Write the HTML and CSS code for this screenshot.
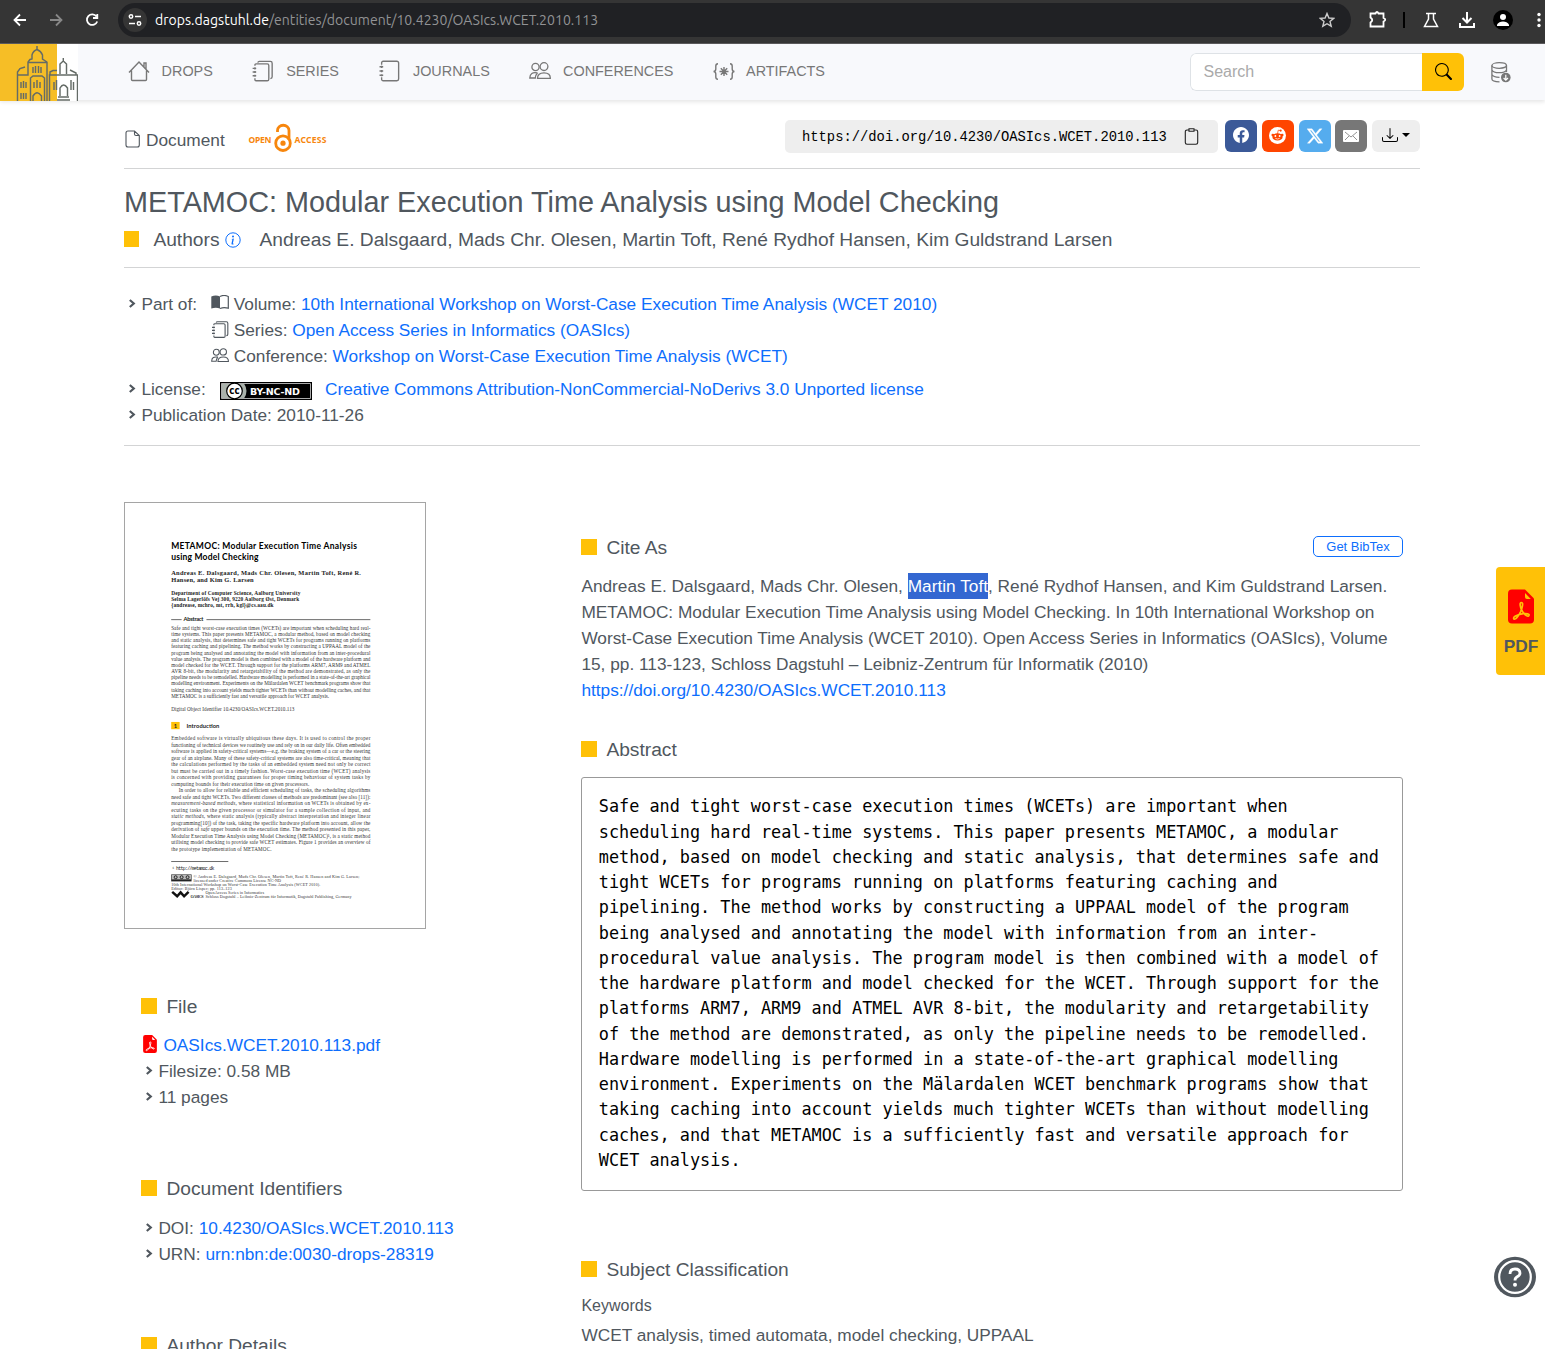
FILE: index.html
```html
<!DOCTYPE html>
<html lang="en">
<head>
<meta charset="utf-8">
<title>METAMOC: Modular Execution Time Analysis using Model Checking</title>
<link rel="stylesheet" href="styles.css">
</head>
<body>
<svg class="defs" width="0" height="0">
  <symbol id="series" viewBox="0 0 20 20"><g fill="none" stroke="currentColor" stroke-width="1.300"><path d="M2.800 5V4.200a1 1 0 0 1 1-1H14.500a1.500 1.500 0 0 1 1.500 1.500V17.800a1.500 1.500 0 0 1-1.500 1.500H3.800a1 1 0 0 1-1-1V17"/><path d="M5.500 2Q5.800 .8 7 .8H17.500A1.700 1.700 0 0 1 19.200 2.500V15.500Q19.200 17 17.500 17.200"/><path d="M.6 7.500H4M.6 11H4M.6 14.500H4M2.800 6.500V8.500M2.800 10V12M2.800 13.500V15.500"/></g></symbol>
  <symbol id="journal" viewBox="0 0 20 20"><g fill="none" stroke="currentColor" stroke-width="1.300"><path d="M2.500 4V2.200A1.500 1.500 0 0 1 4 .7H17A1.700 1.700 0 0 1 18.700 2.400V17.600A1.700 1.700 0 0 1 17 19.300H4A1.500 1.500 0 0 1 2.500 17.800V16"/><path d="M.5 6H4M.5 10H4M.5 14H4M2.500 5V7.200M2.500 9V11.200M2.500 13V15"/></g></symbol>
  <symbol id="people" viewBox="0 0 22 18"><g fill="none" stroke="currentColor" stroke-width="1.300"><circle cx="6.500" cy="5" r="3.600"/><circle cx="15" cy="4.600" r="3.900"/><path d="M8.500 16.300Q8.500 10.800 15 10.800T21.300 16.300ZM8.500 11Q1 9.500.8 16H6.300Q6.500 13 8.500 11"/></g></symbol>
  <symbol id="chev" viewBox="0 0 8 9"><path d="M1.800 1 5.800 4.500 1.800 8" fill="none" stroke="currentColor" stroke-width="2.200"/></symbol>
  <symbol id="pdf" viewBox="0 0 26 34"><path d="M4 0H17L26 9V30a4 4 0 0 1-4 4H4a4 4 0 0 1-4-4V4A4 4 0 0 1 4 0Z" fill="red"/><path d="M17 3.500V7.500a2 2 0 0 0 2 2h3.800Z" fill="var(--mark)"/><path d="M13.500 13C11 13 12.500 18 13.500 20C15.500 24.500 19 27.500 20.800 26.200C22.500 24.500 18 23.500 14 24.300C9 25.200 4.500 27.500 5.800 29.300C7.500 31 11 25.500 12.600 22.300C14 19 15.800 13 13.500 13Z" fill="none" stroke="var(--mark)" stroke-width="1.700"/></symbol>
</svg>

<header class="browser">
  <svg class="b-nav" width="104" height="24" viewBox="0 0 104 24" fill="none" stroke="#fff" stroke-width="1.800"><path d="M18 12H7M12 6.500 6.500 12 12 17.500"/><path stroke="#888" d="M42 12H53M48 6.500 53.500 12 48 17.500"/><path d="M88.500 8.500A5.300 5.300 0 1 0 89.200 13.500M89.300 6V10H85"/></svg>
  <div class="omni">
    <span class="tune"><svg width="14" height="14" viewBox="0 0 14 14" fill="none" stroke="#fff" stroke-width="1.500"><circle cx="3" cy="3.500" r="1.700"/><path d="M7 3.500H13M1 10.500H7"/><circle cx="11" cy="10.500" r="1.700"/></svg></span>
    <span class="url"><b>drops.dagstuhl.de</b>/entities/document/10.4230/OASIcs.WCET.2010.113</span>
    <svg class="star" width="16" height="16" viewBox="0 0 16 16" fill="none" stroke="#ccc" stroke-width="1.400"><path d="M8 1.500 9.900 6 14.700 6.400 11 9.500 12.200 14.200 8 11.700 3.800 14.200 5 9.500 1.300 6.400 6.100 6Z"/></svg>
  </div>
  <svg class="b-tools" width="194" height="24" viewBox="1351 8 194 24" fill="none" stroke="#fff" stroke-width="1.800"><path d="M1370.500 13.500H1375.500Q1377 10.500 1378.500 13.500H1383.500V18Q1387 19.500 1383.500 21.500V26.500H1370.500V22.500Q1374 20 1370.500 17.500Z"/><path stroke="#000" stroke-width="2" d="M1404 12V28"/><path stroke-width="1.500" d="M1426 13.500H1436M1428.500 13.500V19L1424.500 26.500H1437.500L1433.500 19V13.500"/><path stroke-width="2" d="M1467 12V22M1462.500 18 1467 22.500 1471.500 18M1460 23V27H1474V23"/><circle cx="1503" cy="20" r="10" fill="#000" stroke="none"/><circle cx="1503" cy="17" r="3" fill="#fff" stroke="none"/><path d="M1497 26V24.500Q1499 21.500 1503 21.500T1509 24.500V26Z" fill="#fff" stroke="none"/><g fill="#fff" stroke="none"><circle cx="1539" cy="14.500" r="1.700"/><circle cx="1539" cy="20" r="1.700"/><circle cx="1539" cy="25.500" r="1.700"/></g></svg>
</header>

<nav class="nav">
  <svg class="logo" width="78" height="57" viewBox="0 44 78 57"><path fill="#f6be26" d="M0 44H57V101H0Z"/><path fill="#fff" d="M57 44H78V101H57Z"/>
    <g fill="none" stroke="#646b66" stroke-width="1.450"><path d="M17.500 101V75H28V62.500H47V101M17.500 75V72L20 68.500 25 67M28 62 30 59.500 32 59V55Q33 51 37 49.500Q41 51 42.500 55V59L47 62M37 46V50M30.500 101V78L33 76H42L44.500 78V101M33 101V96Q37 89.500 41.500 96V101M49.500 101V75H77.500V101M50 75V72L53 70.500H57M60 74V64L63.300 61 66.500 64V74M63.300 58V61M70 70 76 73V75M60 96V88Q63.500 82 67.500 88V96M58 97H69M57 100H70"/><path d="M33 73V67M35.500 73V66M38.500 73V66M41 73V67M21 88V82M23.500 88V81M26 88V82M34 88V82M37 88V80M40 88V82M21 99V93M23.500 99V93M26 99V93M54 90V82M56.500 90V80M71 90V80M73.500 90V82"/></g></svg>
  <a class="n1"><svg width="22" height="22" viewBox="0 0 22 22" fill="none" stroke="currentColor" stroke-width="1.400"><path d="M1 12.500 11 2 21 12.500M3.500 10.500V19.500Q3.500 20.500 4.500 20.500H17.500Q18.500 20.500 18.500 19.500V10.500M16 7V3H18V9"/></svg>DROPS</a>
  <a class="n2"><svg width="21" height="22"><use href="#series"/></svg>SERIES</a>
  <a class="n3"><svg width="21" height="22"><use href="#journal"/></svg>JOURNALS</a>
  <a class="n4"><svg width="22" height="18"><use href="#people"/></svg>CONFERENCES</a>
  <a class="n5"><svg width="22" height="17" viewBox="0 0 22 17" fill="none" stroke="currentColor" stroke-width="1.400"><path d="M5 .8Q2.800 .8 2.800 3V6Q2.800 8.200.6 8.500Q2.800 8.800 2.800 11V14Q2.800 16.200 5 16.200M17 .8Q19.200 .8 19.200 3V6Q19.200 8.200 21.400 8.500Q19.200 8.800 19.200 11V14Q19.200 16.200 17 16.200M11 4V13M6.500 8.500H15.500M7.800 5.300 14.200 11.700M14.200 5.300 7.800 11.700"/></svg>ARTIFACTS</a>
  <div class="search"><span>Search</span><button><svg width="17" height="17" viewBox="0 0 16 16"><path d="M11.742 10.344a6.500 6.500 0 1 0-1.397 1.398q.044.060.098.115l3.850 3.850a1 1 0 0 0 1.415-1.414l-3.850-3.850a1 1 0 0 0-.115-.1zM12 6.500a5.500 5.500 0 1 1-11 0 5.500 5.500 0 0 1 11 0"/></svg></button></div>
  <svg class="db" width="20" height="21" viewBox="0 0 20 21" fill="none" stroke="#777" stroke-width="1.300"><ellipse cx="8.200" cy="3.500" rx="7.300" ry="2.800"/><path d="M.9 3.500V17Q1 19.700 8.500 19.900M.9 8Q2 10.700 8.200 10.700T15.500 8M.9 12.500Q2 15.200 8.500 15.300M15.500 3.500V10"/><circle cx="14.800" cy="15.500" r="4.800" fill="#777" stroke="none"/><path stroke="#fff" stroke-width="1.200" d="M14.800 12.800V18M12.600 16 14.800 18.200 17 16"/></svg>
</nav>

<main class="page">
  <section class="top">
    <div class="kind"><svg width="17" height="18" viewBox="0 0 17 18" fill="none" stroke="currentColor" stroke-width="1.100"><path d="M10.500 1H4A2 2 0 0 0 2 3V15A2 2 0 0 0 4 17H13.300A2 2 0 0 0 15.300 15V5.500ZM10.500 1V4A1.500 1.500 0 0 0 12 5.500H15.300"/></svg>Document</div>
    <svg class="oa" width="80" height="30" viewBox="248 123 80 30"><g fill="none" stroke="#f7860d" stroke-width="2.800"><circle cx="283" cy="143.200" r="7.300"/><path d="M277.500 132V130.500A5.700 5.200 0 0 1 289 130.500V140"/></g><circle cx="283" cy="143.200" r="2.600" fill="#f7860d"/><g class="oa-t"><text x="248.500" y="143" textLength="23">OPEN</text><text x="294.500" y="143" textLength="32">ACCESS</text></g></svg>
    <div class="doi">https://doi.org/10.4230/OASIcs.WCET.2010.113<svg width="15" height="17" viewBox="0 0 15 17" fill="none" stroke="#222" stroke-width="1.100"><path d="M4.500 2H3A1.700 1.700 0 0 0 1.300 3.700V14.500A1.700 1.700 0 0 0 3 16.200H12A1.700 1.700 0 0 0 13.700 14.500V3.700A1.700 1.700 0 0 0 12 2H10.500M5 .7H10V3.200H5Z"/></svg></div>
    <div class="share">
      <a class="fb"><svg width="16" height="16" viewBox="0 0 16 16" fill="#fff"><path d="M16 8.049c0-4.446-3.582-8.050-8-8.050C3.580 0 0 3.603 0 8.050c0 4.017 2.926 7.347 6.750 7.951v-5.625H4.720V8.050h2.030V6.275c0-2.017 1.195-3.131 3.022-3.131.876 0 1.791.157 1.791.157v1.980h-1.009c-.993 0-1.303.621-1.303 1.258v1.510h2.218l-.354 2.326H9.250V16c3.824-.604 6.750-3.934 6.750-7.951"/></svg></a>
      <a class="rd"><svg width="17" height="17" viewBox="0 0 16 16"><circle cx="8" cy="8" r="8" fill="#fff"/><g fill="#ff4500"><ellipse cx="8" cy="9.300" rx="4.800" ry="3.500"/><circle cx="3.600" cy="7.600" r="1.300"/><circle cx="12.400" cy="7.600" r="1.300"/><circle cx="11" cy="3.400" r="1"/></g><path d="M8 6.500 8.700 3 11 3.400" fill="none" stroke="#ff4500" stroke-width=".7"/><g fill="#fff"><circle cx="6" cy="8.500" r=".9"/><circle cx="10" cy="8.500" r=".9"/></g><path d="M6 10.700Q8 12 10 10.700" stroke="#fff" stroke-width=".7" fill="none"/></svg></a>
      <a class="tw"><svg width="16" height="16" viewBox="0 0 16 16" fill="#fff" stroke="#fff" stroke-width=".3"><path d="M12.600.75h2.454l-5.360 6.142L16 15.250h-4.937l-3.867-5.070-4.425 5.070H.316l5.733-6.570L0 .75h5.063l3.495 4.633L12.601.75Zm-.86 13.028h1.360L4.323 2.145H2.865z"/></svg></a>
      <a class="ml"><svg width="16" height="12" viewBox="0 0 16 12"><rect width="16" height="12" rx="1" fill="#fff"/><path d="M2 2 8 7 14 2M2 10 6 6M14 10 10 6" fill="none" stroke="#777" stroke-width=".8"/></svg></a>
      <a class="dl"><svg width="16" height="16" viewBox="0 0 16 16"><path d="M.5 9.900a.5.500 0 0 1 .5.500v2.500a1 1 0 0 0 1 1h12a1 1 0 0 0 1-1v-2.500a.5.500 0 0 1 1 0v2.500a2 2 0 0 1-2 2H2a2 2 0 0 1-2-2v-2.500a.5.500 0 0 1 .5-.5M7.646 11.854a.5.500 0 0 0 .708 0l3-3a.5.500 0 0 0-.708-.708L8.500 10.293V1.500a.5.500 0 0 0-1 0v8.793L5.354 8.146a.5.500 0 1 0-.708.708z"/></svg><i class="caret"></i></a>
    </div>
  </section>

  <section class="titles">
    <h1>METAMOC: Modular Execution Time Analysis using Model Checking</h1>
    <div class="authors"><i class="sq"></i><span class="lab">Authors</span><svg width="16" height="16" viewBox="0 0 16 16"><circle cx="8" cy="8" r="7.200" fill="none" stroke="#0d6efd" stroke-width="1"/><path fill="#0d6efd" d="m8.930 6.588-2.290.287-.082.380.450.083c.294.070.352.176.288.469l-.738 3.468c-.194.897.105 1.319.808 1.319.545 0 1.178-.252 1.465-.598l.088-.416c-.2.176-.492.246-.686.246-.275 0-.375-.193-.304-.533zM9 4.500a1 1 0 1 1-2 0 1 1 0 0 1 2 0"/></svg><span class="names">Andreas E. Dalsgaard, Mads Chr. Olesen, Martin Toft, René Rydhof Hansen, Kim Guldstrand Larsen</span></div>
  </section>

  <section class="meta">
    <div class="part">
      <div class="row"><svg class="chev"><use href="#chev"/></svg>Part of:</div>
      <div>
        <div class="row"><svg class="ic up" width="18" height="15" viewBox="0 0 18 15"><path d="M.3 1.500Q5-.7 9 1.500V13.500Q5 12 .3 13.500Z" fill="currentColor"/><path d="M9 1.500Q13-.7 17.300 1.500V13.300Q13 12 9 13.500" fill="none" stroke="currentColor" stroke-width="1.200"/></svg>Volume:&nbsp;<a>10th International Workshop on Worst-Case Execution Time Analysis (WCET 2010)</a></div>
        <div class="row"><svg class="ic" width="18" height="17"><use href="#series"/></svg>Series:&nbsp;<a>Open Access Series in Informatics (OASIcs)</a></div>
        <div class="row"><svg class="ic" width="18" height="15"><use href="#people"/></svg>Conference:&nbsp;<a>Workshop on Worst-Case Execution Time Analysis (WCET)</a></div>
      </div>
    </div>
    <div class="row lic"><svg class="chev"><use href="#chev"/></svg>License:<svg class="cc" width="92" height="18" viewBox="0 0 92 18"><path d="M0 0H92V18H0Z"/><path fill="#aab2ab" d="M1.500 1.500H24Q29 9 24 16.500H1.500Z"/><path fill="none" stroke="#aaa" d="M1.500 1.500H90.500V16.500H1.500Z"/><circle cx="14.500" cy="9" r="7.800" fill="#fff" stroke="#000" stroke-width="1.200"/><text x="9.200" y="12" textLength="10.500" class="cct">cc</text><text x="30" y="12.500" textLength="50" class="ccb">BY-NC-ND</text></svg><a>Creative Commons Attribution-NonCommercial-NoDerivs 3.0 Unported license</a></div>
    <div class="row"><svg class="chev"><use href="#chev"/></svg>Publication Date: 2010-11-26</div>
  </section>

  <div class="cols">
    <aside>
      <svg class="thumb" width="302" height="427" viewBox="124 502 302 427">
        <g class="tt"><text x="170.500" y="548" textLength="187">METAMOC: Modular Execution Time Analysis</text><text x="170.500" y="559.200" textLength="88">using Model Checking</text></g>
        <g class="ta"><text x="170.500" y="573.800" textLength="191">Andreas E. Dalsgaard, Mads Chr. Olesen, Martin Toft, René R.</text><text x="170.500" y="581" textLength="83">Hansen, and Kim G. Larsen</text></g>
        <g class="td"><text x="170.500" y="594.300" textLength="130">Department of Computer Science, Aalborg University</text><text x="170.500" y="600.200" textLength="129">Selma Lagerlöfs Vej 300, 9220 Aalborg Øst, Denmark</text><text x="170.500" y="606.200" textLength="103">{andrease, mchro, mt, rrh, kgl}@cs.aau.dk</text></g>
        <path d="M170.500 619H181M206 619H371M170.500 862.500H228" stroke="#444" stroke-width=".8"/>
        <text class="th" x="183" y="620.800" textLength="20">Abstract</text>
        <g class="tb">
          <text x="170.500" y="629" textLength="200.500">Safe and tight worst-case execution times (WCETs) are important when scheduling hard real-</text>
          <text x="170.500" y="635.300" textLength="200.500">time systems. This paper presents METAMOC, a modular method, based on model checking</text>
          <text x="170.500" y="641.600" textLength="200.500">and static analysis, that determines safe and tight WCETs for programs running on platforms</text>
          <text x="170.500" y="647.800" textLength="200.500">featuring caching and pipelining. The method works by constructing a UPPAAL model of the</text>
          <text x="170.500" y="654.100" textLength="200.500">program being analysed and annotating the model with information from an inter-procedural</text>
          <text x="170.500" y="660.300" textLength="200.500">value analysis. The program model is then combined with a model of the hardware platform and</text>
          <text x="170.500" y="666.600" textLength="200.500">model checked for the WCET. Through support for the platforms ARM7, ARM9 and ATMEL</text>
          <text x="170.500" y="672.800" textLength="200.500">AVR 8-bit, the modularity and retargetability of the method are demonstrated, as only the</text>
          <text x="170.500" y="679.100" textLength="200.500">pipeline needs to be remodelled. Hardware modelling is performed in a state-of-the-art graphical</text>
          <text x="170.500" y="685.300" textLength="200.500">modelling environment. Experiments on the Mälardalen WCET benchmark programs show that</text>
          <text x="170.500" y="691.600" textLength="200.500">taking caching into account yields much tighter WCETs than without modelling caches, and that</text>
          <text x="170.500" y="697.800" textLength="159">METAMOC is a sufficiently fast and versatile approach for WCET analysis.</text>
          <text x="170.500" y="711" textLength="124">Digital Object Identifier 10.4230/OASIcs.WCET.2010.113</text>
          <text x="170.500" y="740.500" textLength="200.500">Embedded software is virtually ubiquitous these days. It is used to control the proper</text>
          <text x="170.500" y="747" textLength="200.500">functioning of technical devices we routinely use and rely on in our daily life. Often embedded</text>
          <text x="170.500" y="753.500" textLength="200.500">software is applied in safety-critical systems—e.g. the braking system of a car or the steering</text>
          <text x="170.500" y="760" textLength="200.500">gear of an airplane. Many of these safety-critical systems are also time-critical, meaning that</text>
          <text x="170.500" y="766.500" textLength="200.500">the calculations performed by the tasks of an embedded system need not only be correct</text>
          <text x="170.500" y="773" textLength="200.500">but must be carried out in a timely fashion. Worst-case execution time (WCET) analysis</text>
          <text x="170.500" y="779.500" textLength="200.500">is concerned with providing guarantees for proper timing behaviour of system tasks by</text>
          <text x="170.500" y="786" textLength="139">computing bounds for their execution time on given processors.</text>
          <text x="178" y="793" textLength="193">In order to allow for reliable and efficient scheduling of tasks, the scheduling algorithms</text>
          <text x="170.500" y="799.500" textLength="200.500">need safe and tight WCETs. Two different classes of methods are predominant (see also [11]):</text>
          <text x="170.500" y="806" textLength="200.500"><tspan font-style="italic">measurement-based methods</tspan>, where statistical information on WCETs is obtained by ex-</text>
          <text x="170.500" y="812.500" textLength="200.500">ecuting tasks on the given processor or simulator for a sample collection of input, and</text>
          <text x="170.500" y="819" textLength="200.500"><tspan font-style="italic">static methods</tspan>, where static analysis (typically abstract interpretation and integer linear</text>
          <text x="170.500" y="825.500" textLength="200.500">programming[10]) of the task, taking the specific hardware platform into account, allow the</text>
          <text x="170.500" y="832" textLength="200.500">derivation of <tspan font-style="italic">safe</tspan> upper bounds on the execution time. The method presented in this paper,</text>
          <text x="170.500" y="838.500" textLength="200.500">Modular Execution Time Analysis using Model Checking (METAMOC)¹, is a static method</text>
          <text x="170.500" y="845" textLength="200.500">utilising model checking to provide safe WCET estimates. Figure 1 provides an overview of</text>
          <text x="170.500" y="851.500" textLength="101">the prototype implementation of METAMOC.</text>
        </g>
        <path fill="#ffc107" d="M170.500 722H179V729.300H170.500Z"/><g class="th"><text x="173" y="728">1</text><text x="186" y="728" textLength="33">Introduction</text></g>
        <text class="tm" x="171" y="871" textLength="43">¹ http://metamoc.dk</text>
        <path fill="#222" d="M170.500 875.500H191V882.500H170.500Z"/><path fill="#bbb" d="M171 876H190.500V880.500H171Z"/><g fill="none" stroke="#222"><circle cx="175" cy="878.300" r="1.500"/><circle cx="181" cy="878.300" r="1.500"/><circle cx="187" cy="878.300" r="1.500"/></g>
        <g class="tf"><text x="193" y="879" textLength="167">© Andreas E. Dalsgaard, Mads Chr. Olesen, Martin Toft, René R. Hansen and Kim G. Larsen;</text><text x="193" y="883" textLength="88">licensed under Creative Commons License NC-ND</text><text x="170.500" y="887" textLength="150">10th International Workshop on Worst-Case Execution Time Analysis (WCET 2010).</text><text x="170.500" y="891" textLength="61">Editor: Björn Lisper; pp. 113–123</text><text x="205" y="895" textLength="59">OpenAccess Series in Informatics</text><text x="205" y="899" textLength="147">Schloss Dagstuhl – Leibniz-Zentrum für Informatik, Dagstuhl Publishing, Germany</text><text x="190" y="899" textLength="13" font-weight="bold">OASICS</text></g>
        <path d="M171.500 893 176.500 897.500 180 893.500 183.500 897.500 188 893" fill="none" stroke="#111" stroke-width="2.500"/>
      </svg>
      <div class="side">
        <h2 class="hd">File</h2>
        <div class="row file"><svg class="pdf" width="14" height="18"><use href="#pdf"/></svg><a>OASIcs.WCET.2010.113.pdf</a></div>
        <div class="row"><svg class="chev"><use href="#chev"/></svg>Filesize: 0.58 MB</div>
        <div class="row"><svg class="chev"><use href="#chev"/></svg>11 pages</div>
        <h2 class="hd ids">Document Identifiers</h2>
        <div class="row doi-row"><svg class="chev"><use href="#chev"/></svg>DOI:&nbsp;<a>10.4230/OASIcs.WCET.2010.113</a></div>
        <div class="row"><svg class="chev"><use href="#chev"/></svg>URN:&nbsp;<a>urn:nbn:de:0030-drops-28319</a></div>
        <h2 class="hd ad">Author Details</h2>
      </div>
    </aside>
    <article>
      <div class="cite-h"><h2 class="hd">Cite As</h2><button class="bib">Get BibTex</button></div>
      <p class="cite">Andreas E. Dalsgaard, Mads Chr. Olesen, <mark>Martin Toft</mark>, René Rydhof Hansen, and Kim Guldstrand Larsen.<br>METAMOC: Modular Execution Time Analysis using Model Checking. In 10th International Workshop on<br>Worst-Case Execution Time Analysis (WCET 2010). Open Access Series in Informatics (OASIcs), Volume<br>15, pp. 113-123, Schloss Dagstuhl – Leibniz-Zentrum für Informatik (2010)<br><a>https://doi.org/10.4230/OASIcs.WCET.2010.113</a></p>
      <h2 class="hd abs">Abstract</h2>
      <pre>Safe and tight worst-case execution times (WCETs) are important when
scheduling hard real-time systems. This paper presents METAMOC, a modular
method, based on model checking and static analysis, that determines safe and
tight WCETs for programs running on platforms featuring caching and
pipelining. The method works by constructing a UPPAAL model of the program
being analysed and annotating the model with information from an inter-
procedural value analysis. The program model is then combined with a model of
the hardware platform and model checked for the WCET. Through support for the
platforms ARM7, ARM9 and ATMEL AVR 8-bit, the modularity and retargetability
of the method are demonstrated, as only the pipeline needs to be remodelled.
Hardware modelling is performed in a state-of-the-art graphical modelling
environment. Experiments on the Mälardalen WCET benchmark programs show that
taking caching into account yields much tighter WCETs than without modelling
caches, and that METAMOC is a sufficiently fast and versatile approach for
WCET analysis.</pre>
      <h2 class="hd subj">Subject Classification</h2>
      <h3>Keywords</h3>
      <p class="kw">WCET analysis, timed automata, model checking, UPPAAL</p>
    </article>
  </div>
</main>

<a class="pdf-tab"><svg width="26" height="35"><use href="#pdf"/></svg>PDF</a>
<a class="help"><svg width="42" height="42" viewBox="0 0 42 42"><ellipse cx="21" cy="21" rx="21" ry="20.300" fill="#50575e"/><circle cx="21" cy="21" r="15.800" fill="none" stroke="#fff" stroke-width="2.200"/><path d="M16 18Q16 13 21 13T26 17.200Q26 19.200 23.200 20.800Q21 22 21 24.500" fill="none" stroke="#fff" stroke-width="2.800"/><circle cx="21" cy="28.800" r="2" fill="#fff"/></svg></a>
</body>
</html>
```
FILE: styles.css
```css
* { box-sizing: border-box; }
html, body { height: 1349px; overflow: hidden; }
body { margin: 0; background: #fff; color: #50575e; font: 17.28px/26px "Liberation Sans", Arial, sans-serif; }
.defs { position: absolute; }
h1, h2, h3, p, pre { margin: 0; font-weight: 400; }
a { color: #0d6efd; text-decoration: none; }
svg { display: block; flex: none; }

.browser { display: flex; align-items: center; height: 44px; padding-bottom: 3px; background: #353535; border-bottom: 1px solid #5c5b5d; }
.b-nav { margin: 0 6px 0 8px; }
.omni { display: flex; align-items: center; width: 1233px; height: 34px; border-radius: 17px; background: #202124; padding: 0 16px 0 5px; }
.tune { display: flex; align-items: center; justify-content: center; width: 24px; height: 24px; border-radius: 50%; background: #353535; }
.url { margin-left: 8px; font: 14px/20px Ubuntu, "Noto Sans", sans-serif; letter-spacing: .035px; color: #929395; white-space: nowrap; }
.url b { font-weight: 400; color: #fff; }
.star { margin-left: auto; }

.nav { display: flex; align-items: center; height: 56px; background: #f8f9fc; box-shadow: 0 2px 4px rgba(0,0,0,.1); font-size: 14.4px; }
.nav a { display: flex; align-items: center; color: #777; white-space: nowrap; padding-bottom: 2px; }
.logo { align-self: flex-start; }
.n1 { margin-left: 50px; gap: 11.600px; }
.n2 { margin-left: 39.400px; gap: 13px; }
.n3 { margin-left: 40px; gap: 13px; }
.n4 { margin-left: 39px; gap: 12.300px; }
.n5 { margin-left: 39.700px; gap: 11px; }
.search { display: flex; width: 274px; height: 38px; margin-left: auto; border-radius: 6px; overflow: hidden; font-size: 16px; color: #aaa; }
.search span { flex: 1; border: 1px solid #dee2e6; border-right: 0; border-radius: 6px 0 0 6px; background: #fff; padding: 5px 12.500px; }
.search button { width: 42px; border: 0; background: #ffc107; display: flex; align-items: center; justify-content: center; padding: 0 0 2px; }
.db { margin: 0 34px 0 27px; }

.page { width: 1296px; margin: 0 0 0 124px; }
.top { display: flex; align-items: flex-start; height: 69px; padding-top: 20px; border-bottom: 1px solid #d3d4d5; }
.kind { display: flex; align-items: center; gap: 5px; margin-top: 7px; }
.kind svg { margin-top: -2px; }
.oa { margin: 3px 0 0 23px; }
.oa-t { font: bold 8.5px "Noto Sans", sans-serif; fill: #f7860d; }
.doi { display: flex; align-items: center; justify-content: space-between; width: 433px; height: 33px; margin-left: auto; padding: 2px 19px 0 17px; border-radius: 5px; background: #eee; color: #000; font: 13.82px/33px "Liberation Mono", monospace; }
.doi svg { margin-top: -2px; }
.share { display: flex; gap: 4.750px; margin-left: 7px; }
.share a { display: flex; align-items: center; justify-content: center; width: 32px; height: 32px; border-radius: 6px; padding-bottom: 2px; }
.share .fb { background: #3b5998; }
.share .rd { background: #ff4500; }
.share .tw { background: #55acee; padding-bottom: 0; }
.share .ml { background: #777; padding-bottom: 0; }
.share .dl { background: #eee; width: 48px; gap: 4px; }
.caret { border: 4.500px solid transparent; border-top-color: #000; border-bottom: 0; }

.titles { height: 99px; padding-top: 16px; border-bottom: 1px solid #d3d4d5; }
h1 { font-size: 28.8px; line-height: 35px; }
.authors { display: flex; align-items: center; font-size: 19.2px; line-height: 26px; margin-top: 7px; }
.sq { width: 15px; height: 16px; background: #ffc107; margin: -2px 14.400px 0 0; }
.lab { margin-right: 5px; }
.names { margin-left: 19px; }

.meta { height: 178px; padding: 23px 0 0 4px; border-bottom: 1px solid #d3d4d5; }
.row { display: flex; align-items: center; height: 26px; white-space: nowrap; }
.chev { width: 8px; height: 9px; margin: -2px 5.400px 0 0; }
.part { display: flex; gap: 14px; }
.ic { margin-right: 4.700px; margin-top: -2px; }
.ic.up { margin-top: -4px; }
.lic { margin-top: 7px; }
.cc { margin: 4px 13px 0 14.300px; }
.cct { font: bold 10px "Open Sans", sans-serif; fill: #000; }
.ccb { font: bold 9.5px "DejaVu Sans", sans-serif; fill: #fff; }

.cols { display: grid; grid-template-columns: 457px 822px; }
aside { padding-top: 56px; }
.thumb { border: 1px solid #a5a5a5; font-family: "Liberation Serif", serif; fill: #222; }
.tt { font: bold 8.6px Lato, sans-serif; fill: #000; }
.ta { font-size: 6.500px; font-weight: bold; }
.td { font-size: 5.400px; font-weight: bold; }
.tb { font-size: 5.200px; fill: #333; }
.th { font: bold 5.800px Lato, sans-serif; }
.tm { font: 5px "Liberation Mono", monospace; }
.tf { font-size: 4.200px; fill: #333; }
.side { padding: 66px 0 0 17px; }
.hd { display: flex; align-items: center; font-size: 19.2px; line-height: 24px; height: 24px; }
.hd::before { content: ""; width: 16px; height: 16px; background: #ffc107; margin: -2px 9.400px 0 0; }
.side .chev { margin-left: 4px; }
.file { margin-top: 13px; }
.pdf { margin: -2px 6.400px 0 2px; --mark: #fff; }
.ids { margin-top: 67px; }
.doi-row { margin-top: 14px; }
.ad { margin-top: 67px; }

article { padding-top: 90px; }
.cite-h { display: flex; justify-content: space-between; height: 24px; }
.bib { width: 90px; height: 21px; border: 1px solid #0d6efd; border-radius: 5px; background: #fff; color: #0d6efd; font: 12.96px/19px "Liberation Sans", sans-serif; padding: 0; }
.cite { margin-top: 13px; padding-left: .4px; white-space: nowrap; }
mark { display: inline-block; background: #3367d1; color: #fff; }
.abs { margin-top: 35px; }
pre { margin-top: 15px; height: 414px; border: 1px solid #999; border-radius: 3px; padding: 16.300px 16.800px; color: #000; font: 16.84px/25.27px "DejaVu Sans Mono", monospace; }
.subj { margin-top: 67px; }
h3 { font-size: 16px; line-height: 20px; margin-top: 14px; padding-left: .4px; }
.kw { margin-top: 6px; padding-left: .4px; }

.pdf-tab { position: fixed; right: 0; top: 567px; width: 49px; height: 108px; background: #ffc107; border-radius: 4px 0 0 4px; display: flex; flex-direction: column; align-items: center; padding: 22px 0 0 1px; gap: 9px; color: #50575e; font-weight: bold; --mark: #ffc107; }
.help { position: fixed; left: 1494px; top: 1256px; }
```
